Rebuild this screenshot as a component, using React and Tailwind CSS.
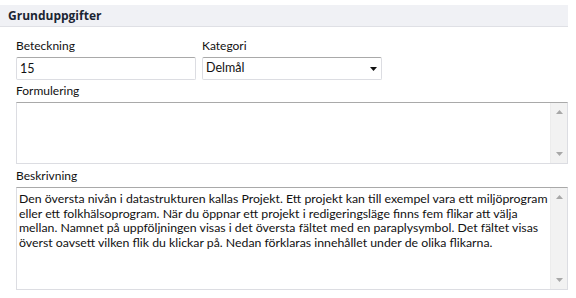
const font = { fontFamily: 'Lato, "Open Sans", sans-serif' };

const Arrow = ({ up }) => (
  <svg width="7" height="4" viewBox="0 0 7 4" className="block">
    {up ? <path d="M0 4 L3.5 0 L7 4 Z" fill="#a8a8a8" /> : <path d="M0 0 L7 0 L3.5 4 Z" fill="#a8a8a8" />}
  </svg>
);

const Scrollbar = () => (
  <div className="flex w-[17px] flex-col items-center justify-between border-l border-[#ececec] bg-[#f2f2f2] py-[7px]">
    <Arrow up />
    <Arrow />
  </div>
);

const Field = ({ label, children, className = "" }) => (
  <div className={`flex flex-col ${className}`}>
    <label className="mb-[4px] h-[15px] leading-[15px] text-[#111]">{label}</label>
    {children}
  </div>
);

const boxBorder = "border border-[#dcdde2] border-t-[#a9a9a9] bg-white";

export default function App() {
  return (
    <div className="w-[576px] h-[298px] bg-white pt-[5px] text-[12px] text-[#111]" style={font}>
      <div className="flex h-[22px] w-[568px] items-center border-b border-[#dfe0e5] bg-[#f0f1f5] pl-[8px]">
        <span className="font-['Open_Sans',sans-serif] font-bold text-[#1b2533]">Grunduppgifter</span>
      </div>

      <div className="flex w-[568px] flex-col pl-[16px] pt-[11px]">
        <div className="flex gap-[6px]">
          <Field label="Beteckning" className="w-[180px]">
            <div className={`h-[23px] px-[3px] text-[12.5px] leading-[21px] ${boxBorder} rounded-[2px]`}>15</div>
          </Field>
          <Field label="Kategori" className="w-[180px]">
            <div className={`flex h-[23px] items-center justify-between pl-[3px] pr-[4px] text-[12.5px] ${boxBorder} rounded-[2px]`}>
              <span>Delmål</span>
              <svg width="7" height="4" viewBox="0 0 7 4">
                <path d="M0 0 L7 0 L3.5 4 Z" fill="#111" />
              </svg>
            </div>
          </Field>
        </div>

        <Field label="Formulering" className="mt-[3px]">
          <div className={`flex h-[62px] ${boxBorder}`}>
            <div className="flex-1" />
            <Scrollbar />
          </div>
        </Field>

        <Field label="Beskrivning" className="mt-[4px]">
          <div className={`flex h-[103px] ${boxBorder}`}>
            <div className="flex-1 px-[2px] pt-[4px] text-[12.3px] leading-[14.5px]">
              Den översta nivån i datastrukturen kallas Projekt. Ett projekt kan till exempel vara ett miljöprogram eller ett folkhälsoprogram. När du öppnar ett projekt i redigeringsläge finns fem flikar att välja mellan. Namnet på uppföljningen visas i det översta fältet med en paraplysymbol. Det fältet visas överst oavsett vilken flik du klickar på. Nedan förklaras innehållet under de olika flikarna.
            </div>
            <Scrollbar />
          </div>
        </Field>
      </div>
    </div>
  );
}
